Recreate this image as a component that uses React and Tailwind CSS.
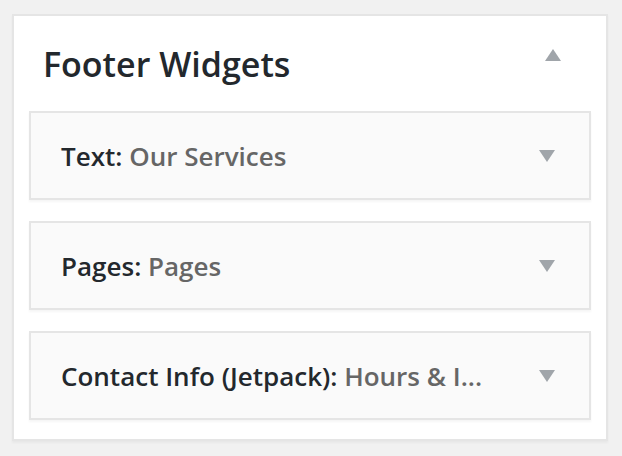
function Caret({ up, className }) {
  return (
    <svg width="16" height="12" viewBox="0 0 16 12" className={className}>
      <path d={up ? 'M8 0 L16 12 L0 12 Z' : 'M0 0 L16 0 L8 12 Z'} fill="#a0a5aa" />
    </svg>
  )
}

const widgets = [
  { type: 'Text', title: 'Our Services' },
  { type: 'Pages', title: 'Pages' },
  { type: 'Contact Info (Jetpack)', title: 'Hours & I...' },
]

function Widget({ type, title }) {
  return (
    <div className="flex h-[89px] items-center justify-between border-2 border-[#e5e5e5] bg-[#fafafa] pl-[30px] pr-[34px] shadow-[0_2px_2px_rgba(0,0,0,0.04)]">
      <p className="text-[26px] font-semibold leading-none">
        <span className="text-[#23282d]">{type}:</span>{' '}
        <span className="text-[#666]">{title}</span>
      </p>
      <Caret className="mt-[1px]" />
    </div>
  )
}

export default function App() {
  return (
    <div className="h-[456px] w-[622px] bg-[#f1f1f1] pl-[12px] pt-[14px] font-['Open_Sans',sans-serif]">
      <div className="h-[427px] w-[596px] border-2 border-[#e5e5e5] bg-white px-[15px] pb-[20px] shadow-[0_2px_2px_rgba(0,0,0,0.04)]">
        <header className="flex h-[95px] items-center justify-between pl-[14px] pr-[30px]">
          <h3 className="text-[34px] font-semibold leading-none text-[#23282d]">Footer Widgets</h3>
          <Caret up className="-mt-[18px]" />
        </header>
        <div className="flex flex-col gap-[21px]">
          {widgets.map((w) => (
            <Widget key={w.type} {...w} />
          ))}
        </div>
      </div>
    </div>
  )
}
